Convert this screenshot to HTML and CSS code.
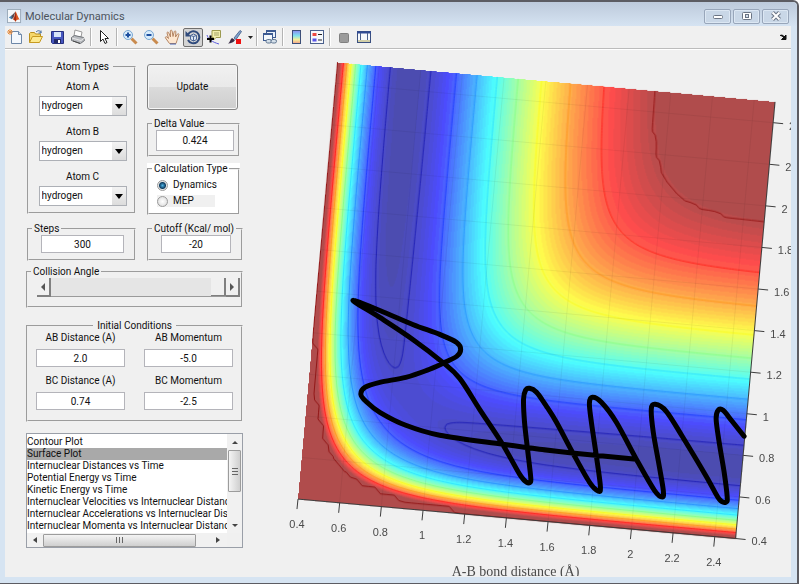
FILE: index.html
```html
<!DOCTYPE html>
<html lang="en">
<head>
<meta charset="utf-8">
<title>Molecular Dynamics</title>
<link rel="stylesheet" href="styles.css">
</head>
<body>
<div class="window">
  <header class="titlebar">
    <svg class="app-icon" viewBox="0 0 16 16" aria-hidden="true">
      <rect x=".5" y=".5" width="14" height="14" fill="#f4f7fa" stroke="#9aa9b8"/>
      <path d="M2 9 5 7 7 8 5 11z" fill="#3c7fb5"/>
      <path d="M5 7 9 3 7 9 5 11z" fill="#5a4a50"/>
      <path d="M9 2.500c1 1 2.500 6 4.500 9-2-1-3 0-4.500 2-.8-1.500-1.600-2.500-3-2.500 2-1 2.500-6 3-8.500z" fill="#d9541e"/>
      <path d="M9 2.500c.5 3 1 6 .5 11-.8-1.500-1.600-2.500-3-2.500 2-1 2-6 2.500-8.500z" fill="#a32a14"/>
    </svg>
    <h1>Molecular Dynamics</h1>
    <div class="window-buttons">
      <button type="button" aria-label="Minimize"><svg viewBox="0 0 12 10"><rect x="1.500" y="4.500" width="9" height="3" rx="1" fill="#fff" stroke="#6a7484"/></svg></button>
      <button type="button" aria-label="Maximize"><svg viewBox="0 0 12 10"><rect x="1.500" y="1.500" width="9" height="7" rx="1" fill="#fff" stroke="#6a7484"/><rect x="4.500" y="3.500" width="3" height="3" fill="#d5e0ec" stroke="#6a7484"/></svg></button>
      <button type="button" aria-label="Close"><svg viewBox="0 0 12 10"><path d="M2.500 1.500 9.500 8.500M9.500 1.500 2.500 8.500" stroke="#6a7484" stroke-width="4"/><path d="M2.500 1.500 9.500 8.500M9.500 1.500 2.500 8.500" stroke="#fff" stroke-width="2"/></svg></button>
    </div>
  </header>

  <nav class="toolbar" aria-label="Figure toolbar">
    <button type="button" aria-label="New figure"><svg viewBox="0 0 16 16"><path d="M4.500 2.500h7l3 3v9h-10z" fill="#f4f8fd" stroke="#6d87a8"/><path d="M11.500 2.500v3h3" fill="#cfdcea" stroke="#6d87a8"/><path d="M3 0v6M0 3h6M1 1l4 4M5 1 1 5" stroke="#e58a3c"/></svg></button>
    <button type="button" aria-label="Open"><svg viewBox="0 0 16 16"><path d="M1.500 13.500v-9l1-1h4l1 1.500h5v3" fill="#f5d76b" stroke="#b98f1e"/><path d="M1.500 13.500 4.500 7.500h10l-3 6z" fill="#fde98e" stroke="#c79a20"/><path d="M8 3c2-2 4-1.500 5 .5m0-2v2.500h-2.500" fill="none" stroke="#3f6a9c"/></svg></button>
    <button type="button" aria-label="Save"><svg viewBox="0 0 16 16"><path d="M2.500 2.500h12v12h-11l-1-1z" fill="#4656c0" stroke="#26307e"/><rect x="5" y="3" width="7" height="5" fill="#d6e4f8"/><rect x="5" y="10" width="7" height="4" fill="#222a66"/><rect x="9" y="11" width="2" height="3" fill="#fff"/></svg></button>
    <button type="button" aria-label="Print"><svg viewBox="0 0 16 16"><path d="m4 7 1-6 7 2-1 5z" fill="#fff" stroke="#9a9a9a"/><path d="m1.500 8.500 3-2 9 2 1 3-4 3-9-3z" fill="#b9bcc1" stroke="#6f7378"/><path d="m2 9 9 2.500 3.500-2.500" fill="none" stroke="#e9e9e9"/><path d="m3 12 7 2.500" stroke="#4a4a4a"/></svg></button>
    <span class="sep"></span>
    <button type="button" aria-label="Edit plot"><svg viewBox="0 0 16 16"><path d="M4.500 1.500v11l2.500-2.500 2 4.500 2-1-2-4h3.500z" fill="#fff" stroke="#222"/></svg></button>
    <span class="sep"></span>
    <button type="button" aria-label="Zoom in"><svg viewBox="0 0 16 16"><path d="m9.500 9.500 5 5" stroke="#c98b4e" stroke-width="3"/><circle cx="6" cy="6" r="4.500" fill="#d8ecfb" stroke="#7aa7d2"/><path d="M6 3.500v5M3.500 6h5" stroke="#1d4fa0" stroke-width="2"/></svg></button>
    <button type="button" aria-label="Zoom out"><svg viewBox="0 0 16 16"><path d="m9.500 9.500 5 5" stroke="#c98b4e" stroke-width="3"/><circle cx="6" cy="6" r="4.500" fill="#d8ecfb" stroke="#7aa7d2"/><path d="M3.500 6h5" stroke="#1d4fa0" stroke-width="2"/></svg></button>
    <button type="button" aria-label="Pan"><svg viewBox="0 0 16 16"><path d="M5.500 14.500 1.500 9c-.6-1 .6-1.800 1.500-1l1.500 1.500L3 4c0-1.200 1.300-1.300 1.700-.2L6.500 8 6.300 2c.2-1.200 1.600-1 1.800 0L9 7.500 10.300 2.500c.4-1 1.600-.7 1.600.4L11.500 8l2-3c.7-.8 1.700-.2 1.400.8L13 11.500l-1 3z" fill="#fde6cf" stroke="#b58562"/><path d="M6 15h6" stroke="#4a66b0"/></svg></button>
    <button type="button" class="pressed" aria-label="Rotate 3D" aria-pressed="true"><svg viewBox="0 0 16 16"><path d="M3 5.500a6 6 0 1 1 0 5.500" fill="none" stroke="#2f4a7c" stroke-width="2"/><path d="M.5 2v5.500H6z" fill="#2f4a7c"/><path d="m5.500 6.500 3-1.500 3 1.500v4l-3 1.500-3-1.500zl3 1 3-1m-3 1V12" fill="#dce6f3" stroke="#4b6696"/></svg></button>
    <button type="button" aria-label="Data cursor"><svg viewBox="0 0 16 16"><path d="M6 1.500h8.500v7H10L7.500 11V8.500H6z" fill="#f2efad" stroke="#9c9a50"/><path d="M8 4h5M8 6h5" stroke="#a5a36a"/><path d="M1 6c1 4 5 7 12 9" fill="none" stroke="#5c5ce0"/><path d="M4.500 6.500v7M1 10h7" stroke="#000" stroke-width="2"/></svg></button>
    <button type="button" aria-label="Brush"><svg viewBox="0 0 16 16"><path d="m7 9 6-7.500 1.500 1L9 10.500z" fill="#7fa2cf" stroke="#566f96"/><path d="M1 14.500c2-1 2-4 4-5.500l3 2c-1 2-4 3.500-7 3.500z" fill="#3a2c45"/><rect x="9" y="10" width="5" height="5" fill="#f01010"/></svg></button>
    <button type="button" class="caret" aria-label="Brush options"><svg viewBox="0 0 8 16"><path d="M2 7h5L4.500 10z" fill="#222"/></svg></button>
    <span class="sep"></span>
    <button type="button" aria-label="Link plot"><svg viewBox="0 0 16 16"><rect x="4.500" y="1.500" width="9" height="7" fill="#eaf1fa" stroke="#3c5a92"/><path d="M4 2h10" stroke="#3c5a92" stroke-width="2"/><rect x="1.500" y="4.500" width="9" height="7" fill="#f4f8fc" stroke="#3c5a92"/><path d="M1 5h10" stroke="#3c5a92" stroke-width="2"/><rect x="4" y="10.500" width="5.500" height="3.500" rx="1.700" fill="#d5e0ea" stroke="#5e7590"/><rect x="9" y="10.500" width="5.500" height="3.500" rx="1.700" fill="#d5e0ea" stroke="#5e7590"/></svg></button>
    <span class="sep"></span>
    <button type="button" aria-label="Insert colorbar"><svg viewBox="0 0 16 16"><defs><linearGradient id="bar" x2="0" y2="1"><stop offset="0" stop-color="#8b8bf0"/><stop offset=".4" stop-color="#7fe3ee"/><stop offset=".7" stop-color="#f4f09a"/><stop offset="1" stop-color="#f3a08a"/></linearGradient></defs><rect x="4.500" y="1.500" width="8" height="13" fill="url(#bar)" stroke="#3d4f78" stroke-width="1"/></svg></button>
    <button type="button" aria-label="Insert legend"><svg viewBox="0 0 16 16"><rect x="1.500" y="1.500" width="13" height="13" fill="#f7f9fc" stroke="#4b608c"/><rect x="3.500" y="4" width="4" height="3" fill="#ee4a43"/><rect x="3.500" y="9.500" width="4" height="3" fill="#5a55e6"/><path d="M9 5.500h4M9 11h4" stroke="#222"/></svg></button>
    <span class="sep"></span>
    <button type="button" aria-label="Hide plot tools"><svg viewBox="0 0 16 16"><rect x="4.500" y="4.500" width="9" height="9" rx="1" fill="#9b9b9b" stroke="#808080"/></svg></button>
    <button type="button" aria-label="Show plot tools"><svg viewBox="0 0 16 16"><rect x="1.500" y="2.500" width="13" height="11" fill="#f6f8fb" stroke="#3a4f80"/><path d="M1 3.500h14" stroke="#2f4a95" stroke-width="2"/><path d="M4.500 4v7M11.500 4v7" stroke="#4b608c"/><path d="M2 12h12" stroke="#d2cfa8" stroke-width="2"/></svg></button>
    <button type="button" class="dock" aria-label="Dock figure"><svg viewBox="0 0 8 8"><path d="M1 2.500c2-1 4 0 4.500 2.500M7 2v4.500H2.500z" fill="#111" stroke="#111"/></svg></button>
  </nav>

  <main class="figure">
    <form class="panel">
      <div class="columns">
        <fieldset class="atoms">
          <legend class="centered">Atom Types</legend>
          <label for="atom-a">Atom A</label>
          <span class="drop"><select id="atom-a"><option>hydrogen</option></select></span>
          <label for="atom-b">Atom B</label>
          <span class="drop"><select id="atom-b"><option>hydrogen</option></select></span>
          <label for="atom-c">Atom C</label>
          <span class="drop"><select id="atom-c"><option>hydrogen</option></select></span>
        </fieldset>
        <div class="side">
          <button type="button" class="update">Update</button>
          <fieldset class="single">
            <legend id="delta-label">Delta Value</legend>
            <input type="text" value="0.424" aria-labelledby="delta-label">
          </fieldset>
          <div class="white">
            <fieldset class="calc">
              <legend>Calculation Type</legend>
              <label><input type="radio" name="calc" checked>Dynamics</label>
              <label class="grey"><input type="radio" name="calc">MEP</label>
            </fieldset>
          </div>
        </div>
      </div>
      <div class="columns second">
        <fieldset class="single short">
          <legend id="steps-label">Steps</legend>
          <input type="text" value="300" aria-labelledby="steps-label">
        </fieldset>
        <fieldset class="single short">
          <legend id="cutoff-label">Cutoff (Kcal/ mol)</legend>
          <input type="text" value="-20" aria-labelledby="cutoff-label">
        </fieldset>
      </div>
      <fieldset class="angle">
        <legend id="angle-label">Collision Angle</legend>
        <div class="slider">
          <button type="button" aria-label="Decrease angle"><svg viewBox="0 0 6 8"><path d="M5 0v8L1 4z" fill="#555"/></svg></button>
          <input type="range" min="0" max="180" value="180" aria-labelledby="angle-label">
          <button type="button" aria-label="Increase angle"><svg viewBox="0 0 6 8"><path d="M1 0v8l4-4z" fill="#555"/></svg></button>
        </div>
      </fieldset>
      <fieldset class="initial">
        <legend class="centered">Initial Conditions</legend>
        <label>AB Distance (A)<input type="text" value="2.0"></label>
        <label>AB Momentum<input type="text" value="-5.0"></label>
        <label>BC Distance (A)<input type="text" value="0.74"></label>
        <label>BC Momentum<input type="text" value="-2.5"></label>
      </fieldset>
      <div class="listbox">
        <select size="8" aria-label="Plot type">
          <option>Contour Plot</option>
          <option selected>Surface Plot</option>
          <option>Internuclear Distances vs Time</option>
          <option>Potential Energy vs Time</option>
          <option>Kinetic Energy vs Time</option>
          <option>Internuclear Velocities vs Internuclear Distance</option>
          <option>Internuclear Accelerations vs Internuclear Distance</option>
          <option>Internuclear Momenta vs Internuclear Distance</option>
        </select>
        <div class="vbar">
          <svg viewBox="0 0 6 4"><path d="M0 4h6L3 1z" fill="#444"/></svg>
          <span class="thumb"></span>
          <svg viewBox="0 0 6 4"><path d="M0 0h6L3 3z" fill="#444"/></svg>
        </div>
        <div class="hbar">
          <svg viewBox="0 0 4 6"><path d="M4 0v6L0 3z" fill="#444"/></svg>
          <span class="thumb"></span>
          <svg viewBox="0 0 4 6"><path d="M0 0v6l4-3z" fill="#444"/></svg>
        </div>
      </div>
    </form>
    <div class="plot">
      <canvas id="surface" width="502" height="527"></canvas>
      <svg id="axes" viewBox="290 50 502 527" role="img" aria-label="Potential energy surface with trajectory"></svg>
    </div>
  </main>
</div>
<script src="plot.js"></script>
</body>
</html>
```
FILE: styles.css
```css
* { box-sizing: border-box; }

body {
  margin: 0;
  background: #fff;
  font: 10px/12px Roboto, "Liberation Sans", sans-serif;
  color: #111;
}

button, input, select {
  font: inherit;
  color: inherit;
  margin: 0;
  padding: 0;
}

svg { display: block; }

.window {
  display: flex;
  flex-direction: column;
  min-height: 100vh;
  margin-right: 1px;
  padding: 0 6px 6px 5px;
  background: #d6e4f2;
  border: solid #5c5c62;
  border-width: 2px 2px 1px 0;
  border-radius: 0 6px 0 0;
}

.titlebar {
  display: flex;
  align-items: center;
  gap: 3px;
  height: 24px;
  margin: 0 -6px 0 -5px;
  padding: 4px 8px 0 7px;
  background: linear-gradient(#bdcadb, #d5e3f2);
  border-radius: 0 5px 0 0;
}

.app-icon { width: 15px; height: 15px; }

h1 {
  flex: 1;
  margin: 0;
  padding-top: 1px;
  font: 11px/16px Roboto, "Open Sans", sans-serif;
  color: #4c535c;
}

.window-buttons { display: flex; gap: 2px; }

.window-buttons button {
  display: grid;
  place-items: center;
  width: 27px;
  height: 15px;
  background: #c9d7e7;
  border: 1px solid #98a6ba;
  border-radius: 2px;
  box-shadow: inset 0 0 0 1px #dce7f3;
}

.window-buttons svg { width: 12px; height: 10px; }

.toolbar {
  display: flex;
  align-items: center;
  gap: 1px;
  height: 23px;
  background: #f0f0f0;
  border-bottom: 1px solid #bcbcbc;
}

.toolbar button {
  display: grid;
  place-items: center;
  width: 20px;
  height: 19px;
  background: none;
  border: 0;
}

.toolbar svg { width: 16px; height: 16px; }

.toolbar .pressed {
  background: #d4d4d4;
  border: 1px solid #6f6f6f;
  border-radius: 2px;
}

.toolbar .caret { width: 8px; }
.toolbar .caret svg { width: 8px; }

.toolbar .dock { margin-left: auto; width: 16px; }
.toolbar .dock svg { width: 8px; height: 8px; }

.sep {
  width: 2px;
  height: 18px;
  margin: 0 1px;
  background: #b4b4b4;
  border-right: 1px solid #fff;
}

.figure {
  display: flex;
  flex: 1;
  align-items: flex-start;
  background: #f0f0f0;
  border-top: 1px solid #fff;
}

.panel {
  flex: none;
  width: 238px;
  padding: 11px 0 0 21px;
}

.columns {
  display: grid;
  grid-template-columns: 109px 96px;
  justify-content: space-between;
  padding-left: 1px;
}

fieldset {
  min-width: 0;
  margin: 0;
  padding: 0;
  border: 2px groove #f0f0f0;
}

legend {
  margin-left: 3px;
  padding: 0 2px;
  white-space: nowrap;
}

legend.centered { margin: 0 auto; padding: 0 4px; }

input[type="text"] {
  display: block;
  background: #fff;
  border: 1px solid #b4b4ba;
  text-align: center;
}

.atoms {
  display: flex;
  flex-direction: column;
  align-items: center;
  height: 153px;
  padding-left: 2px;
}

.atoms label { margin: 8px 0 3px; }
.atoms label + .drop { margin-bottom: 2px; }

.drop {
  position: relative;
  width: 88px;
}

.drop select {
  display: block;
  width: 100%;
  height: 20px;
  padding-left: 2px;
  appearance: none;
  border: 1px solid #adb0b6;
  border-radius: 0;
  background: linear-gradient(#f3f3f3, #dcdcdc) right / 14px 100% no-repeat #fff;
}

.drop::after {
  content: "";
  position: absolute;
  top: 8px;
  right: 4px;
  border: solid transparent;
  border-width: 5px 4px 0;
  border-top-color: #000;
  pointer-events: none;
}

.side {
  display: flex;
  flex-direction: column;
  padding: 3px 3px 0 0;
}

.update {
  height: 46px;
  margin-right: 2px;
  border: 1px solid #858585;
  border-radius: 3px;
  background: linear-gradient(#f1f1f1, #e9e9e9 50%, #dbdbdb 50%, #cecece);
  box-shadow: inset 0 0 0 1px #f6f6f6;
}

.single {
  height: 39px;
  margin-top: 8px;
}

.single input {
  width: calc(100% - 11px);
  height: 21px;
  margin-left: 7px;
}

.white {
  margin-top: 6px;
  background: #fff;
}

.calc { height: 52px; }

.calc label {
  display: flex;
  align-items: center;
  gap: 5px;
  width: 58px;
  height: 16px;
  margin: 2px 0 0 8px;
}

.calc .grey {
  height: 12px;
  background: #f0f0f0;
}

.calc input {
  appearance: none;
  flex: none;
  width: 11px;
  height: 11px;
  border: 1px solid #9a9a9a;
  border-radius: 50%;
  background: radial-gradient(#fff, #d6d6d6);
}

.calc input:checked {
  background: radial-gradient(#4fb4e6, #0d3c60 3px, #e4e4e4 4px);
}

.second { margin-top: 8px; }

.short {
  height: 38px;
  margin: 0;
}

.short input {
  width: calc(100% - 22px);
  height: 18px;
  margin-left: 12px;
}

.angle {
  height: 42px;
  margin-top: 5px;
}

.slider {
  display: flex;
  height: 19px;
  margin: 0 1px 0 9px;
}

.slider button {
  display: grid;
  place-items: center;
  width: 14px;
  border: solid #808080;
  border-width: 0 2px 2px 0;
  background: #f0f0f0;
}

.slider svg { width: 6px; height: 8px; }

.slider input {
  appearance: none;
  flex: 1;
  min-width: 0;
  background: #e5e5e5;
  border-bottom: 1px solid #9a9a9a;
}

.slider input::-webkit-slider-thumb {
  appearance: none;
  width: 15px;
  height: 18px;
  background: #f0f0f0;
  border: solid #808080;
  border-width: 0 2px 1px 0;
}

.initial {
  display: grid;
  grid-template-columns: 89px 89px;
  justify-content: space-between;
  align-content: start;
  row-gap: 8px;
  height: 102px;
  margin-top: 12px;
  padding: 0 8px;
}

.initial label { text-align: center; }

.initial input {
  width: 100%;
  height: 18px;
  margin-top: 5px;
}

.listbox {
  display: grid;
  grid-template: 99px 14px / 1fr 15px;
  margin-top: 11px;
  border: 1px solid #9a9fa8;
  background: #f0f0f0;
}

.listbox select {
  width: 100%;
  height: 99px;
  padding-top: 2px;
  border: 0;
  border-radius: 0;
  overflow: hidden;
  background: #fff;
  outline: 0;
}

.listbox option {
  height: 12px;
  min-height: 12px;
  padding: 0;
}

.listbox option:checked { background: linear-gradient(#a9a9a9, #a9a9a9); }

.vbar, .hbar {
  display: flex;
  align-items: center;
  background: #f1f1f1;
}

.vbar { flex-direction: column; padding: 6px 0 5px; }
.hbar { padding: 0 7px 0 6px; }

.vbar svg { width: 6px; height: 4px; }
.hbar svg { width: 4px; height: 6px; }

.thumb {
  border: 1px solid #9c9c9c;
  border-radius: 1px;
}

.vbar .thumb {
  width: 13px;
  height: 42px;
  margin: 6px 0 auto;
  background:
    repeating-linear-gradient(#666 0 1px, transparent 1px 3px) center / 6px 7px no-repeat,
    linear-gradient(90deg, #f4f4f4, #cfcfcf);
}

.hbar .thumb {
  width: 153px;
  height: 13px;
  margin: 0 auto 0 6px;
  background:
    repeating-linear-gradient(90deg, #666 0 1px, transparent 1px 3px) center / 7px 6px no-repeat,
    linear-gradient(#f4f4f4, #cfcfcf);
}

.plot {
  display: grid;
  flex: 1;
  min-width: 0;
  margin-left: 47px;
}

.plot canvas, .plot svg {
  grid-area: 1 / 1;
  width: 100%;
  height: auto;
}

.plot svg {
  overflow: visible;
  clip-path: inset(0 0 0 -10px);
}

.frame, .tick { stroke: #3c3c3c; stroke-width: 1; fill: none; }
.grid { stroke: #000; stroke-opacity: .06; fill: none; }
.tick-label { font: 11px "Liberation Sans", sans-serif; fill: #4a4a4a; }
.axis-title { font: 14px "Liberation Serif", serif; fill: #4a4a4a; }
.trajectory { fill: none; stroke: #000; stroke-width: 5; stroke-linecap: round; stroke-linejoin: round; }
```
FILE: plot.js
```js
// LEPS potential of collinear H + H2 (energies in kcal/mol, distances in angstrom)
const DEPTH = 109.5, BETA = 1.942, R0 = 0.7414, SATO = 0.185, CUTOFF = -20;
const LOW = -109.5, MIN = 0.4, SPAN = 2.1;

function pair(r) {
  const e = Math.exp(-BETA * (r - R0));
  const s = DEPTH * (e * e - 2 * e) * (1 + SATO);
  const t = DEPTH / 2 * (e * e + 2 * e) * (1 - SATO);
  return [(s + t) / 2, (s - t) / 2];
}

function energy(ab, bc, cap = CUTOFF) {
  const [q1, j1] = pair(ab), [q2, j2] = pair(bc), [q3, j3] = pair(ab + bc);
  const mix = ((j1 - j2) ** 2 + (j2 - j3) ** 2 + (j3 - j1) ** 2) / 2;
  return Math.min(cap, (q1 + q2 + q3 - Math.sqrt(mix)) / (1 + SATO));
}

// Corners of the rotated axes: origin, x direction, y direction
const O = [298, 500], U = [438.5, 39.5], V = [39.5, -437.5];
const at = (x, y) => {
  const u = (x - MIN) / SPAN, v = (y - MIN) / SPAN;
  return [O[0] + u * U[0] + v * V[0], O[1] + u * U[1] + v * V[1]];
};

function jet(t) {
  const k = Math.min(63, Math.max(0, Math.floor(t * 64))) / 63 * 0.97 + 0.015;
  const c = m => Math.max(0, Math.min(1, 1.5 - Math.abs(4 * k - m)));
  return [c(3), c(2), c(1)].map(a => a * 255);
}

const canvas = document.getElementById('surface');
const ctx = canvas.getContext('2d');
const image = ctx.createImageData(canvas.width, canvas.height);
const det = U[0] * V[1] - U[1] * V[0];
for (let py = 0; py < canvas.height; py++) {
  for (let px = 0; px < canvas.width; px++) {
    const dx = px + 290.5 - O[0], dy = py + 50.5 - O[1];
    const u = (dx * V[1] - dy * V[0]) / det, v = (dy * U[0] - dx * U[1]) / det;
    if (u < 0 || u > 1 || v < 0 || v > 1) continue;
    const rgb = jet((energy(MIN + SPAN * u, MIN + SPAN * v) - LOW) / (CUTOFF - LOW));
    const i = (py * canvas.width + px) * 4;
    for (let k = 0; k < 3; k++) image.data[i + k] = rgb[k] * 0.7 + 76;
    image.data[i + 3] = 255;
  }
}
ctx.putImageData(image, 0, 0);

// Contour lines by marching squares
ctx.translate(-290, -50);
ctx.lineWidth = 0.8;
function contour(level, step, color, cap) {
  const n = Math.round(SPAN / step), z = [];
  for (let i = 0; i <= n; i++) {
    z.push([]);
    for (let j = 0; j <= n; j++) z[i].push(energy(MIN + i * SPAN / n, MIN + j * SPAN / n, cap) - level);
  }
  ctx.beginPath();
  for (let i = 0; i < n; i++) for (let j = 0; j < n; j++) {
    const c = [[i, j], [i + 1, j], [i + 1, j + 1], [i, j + 1]], hit = [];
    for (let k = 0; k < 4; k++) {
      const a = c[k], b = c[(k + 1) % 4], za = z[a[0]][a[1]], zb = z[b[0]][b[1]];
      if (za < 0 !== zb < 0) {
        const f = za / (za - zb);
        hit.push(at(MIN + (a[0] + f * (b[0] - a[0])) * SPAN / n, MIN + (a[1] + f * (b[1] - a[1])) * SPAN / n));
      }
    }
    for (let k = 0; k + 1 < hit.length; k += 2) { ctx.moveTo(...hit[k]); ctx.lineTo(...hit[k + 1]); }
  }
  ctx.strokeStyle = color;
  ctx.stroke();
}
[[-105.6, '#1414b4'], [-95.3, '#1432ff'], [-85.2, '#1e8cff'], [-74.9, '#28dcff'], [-64.7, '#82ff82'],
 [-54.3, '#fafa14'], [-43.2, '#ff9614'], [-32.8, '#ff1414']].forEach(([l, c]) => contour(l, 0.015, c));
contour(-22, 0.03, '#8c0a0a', -21.9);

// Axes, grid, ticks and labels
const svg = document.getElementById('axes');
function add(tag, cls, attrs, text) {
  const el = document.createElementNS('http://www.w3.org/2000/svg', tag);
  el.setAttribute('class', cls);
  for (const k in attrs) el.setAttribute(k, attrs[k]);
  if (text) el.textContent = text;
  svg.append(el);
}
const line = (cls, a, b) => add('path', cls, { d: `M${a}L${b}` });
for (let k = 0; k <= 10; k++) {
  const r = MIN + k * 0.2, name = String(Math.round(r * 10) / 10);
  if (k) {
    line('grid', at(r, MIN), at(r, MIN + SPAN));
    line('grid', at(MIN, r), at(MIN + SPAN, r));
  }
  const [x, y] = at(r, MIN), [s, t] = at(MIN + SPAN, r);
  line('tick', [x, y], [x - 1, y + 10]);
  line('tick', [s, t], [s + 10, t + 1]);
  add('text', 'tick-label', { x: x - 1, y: y + 29, 'text-anchor': 'middle' }, name);
  add('text', 'tick-label', { x: s + 16, y: t + 7 }, name);
}
add('path', 'frame', { d: `M${at(MIN, MIN)}L${at(2.5, MIN)}L${at(2.5, 2.5)}` });
add('text', 'axis-title', { x: 452, y: 577 }, 'A-B bond distance (Å)');

// Trajectory, smoothed with Catmull-Rom segments
const P = [[637, 460], [575, 454], [540, 450], [503, 445], [440, 436], [406, 426], [380, 413], [366, 402],
  [361, 395], [365, 388], [380, 383], [406, 378], [427, 371], [443, 364], [457, 357], [461, 350], [457, 343],
  [440, 335], [413, 325], [380, 311], [353, 301], [380, 318], [413, 340], [443, 363], [460, 379], [480, 410],
  [503, 445], [520, 475], [527, 483], [531, 483], [531, 476], [528, 450], [525, 423], [524, 400], [526, 391],
  [530, 389], [537, 393], [547, 407], [557, 423], [573, 453], [590, 483], [599, 492], [601, 487], [597, 457],
  [592, 423], [590, 404], [593, 398], [602, 403], [617, 423], [637, 460], [655, 491], [663, 498], [664, 491],
  [660, 467], [654, 433], [652, 410], [656, 405], [667, 412], [683, 437], [707, 477], [720, 500], [727, 503],
  [728, 497], [725, 473], [720, 443], [717, 420], [719, 411], [724, 411], [733, 422], [745, 437]];
let d = `M${P[0]}`;
for (let i = 0; i < P.length - 1; i++) {
  const a = P[i - 1] || P[i], b = P[i], c = P[i + 1], e = P[i + 2] || c;
  d += `C${b[0] + (c[0] - a[0]) / 6} ${b[1] + (c[1] - a[1]) / 6} ${c[0] - (e[0] - b[0]) / 6} ${c[1] - (e[1] - b[1]) / 6} ${c}`;
}
add('path', 'trajectory', { d });
```
